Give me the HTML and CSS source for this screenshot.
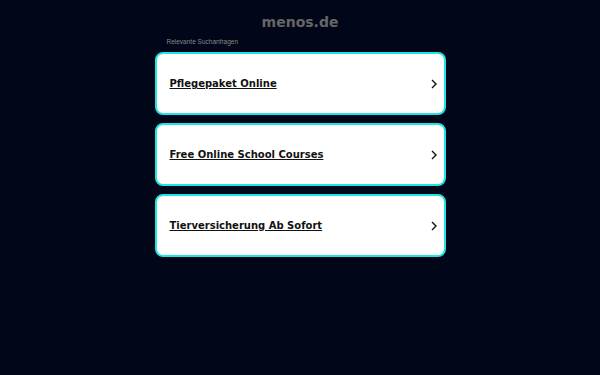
FILE: index.html
```html
<!DOCTYPE html>
<html lang="de">

<head>
  <meta charset="UTF-8">
  <meta name="viewport" content="width=device-width, initial-scale=1.0">
  <title>menos.de</title>
  <link rel="stylesheet" href="styles.css">
</head>

<body>
  <div class="page">
    <h1 class="domain">menos.de</h1>
    <div class="related">
      <p class="related-title">Relevante Suchanfragen</p>
      <ul class="links">
        <li class="link-card">
          <a href="#">Pflegepaket Online</a>
          <svg class="chevron" width="8" height="10" viewBox="0 0 8 10"><polyline points="2,1 6,5 2,9" /></svg>
        </li>
        <li class="link-card">
          <a href="#">Free Online School Courses</a>
          <svg class="chevron" width="8" height="10" viewBox="0 0 8 10"><polyline points="2,1 6,5 2,9" /></svg>
        </li>
        <li class="link-card">
          <a href="#">Tierversicherung Ab Sofort</a>
          <svg class="chevron" width="8" height="10" viewBox="0 0 8 10"><polyline points="2,1 6,5 2,9" /></svg>
        </li>
      </ul>
    </div>
  </div>
</body>

</html>
```

FILE: styles.css
```css
body {
  margin: 0;
  background: #020619;
  font-family: "DejaVu Sans", sans-serif;
}

.page {
  display: flex;
  flex-direction: column;
  align-items: center;
  padding-top: 14px;
}

.domain {
  margin: 0;
  font-size: 14px;
  font-weight: bold;
  color: #666;
  line-height: 17px;
}

.related {
  width: 291px;
  margin-top: 6px;
}

.related-title {
  margin: 0 0 6px 12px;
  font-family: "Liberation Sans", sans-serif;
  font-size: 6.5px;
  color: #888;
  line-height: 9px;
}

.links {
  list-style: none;
  margin: 0;
  padding: 0;
  display: flex;
  flex-direction: column;
  gap: 8px;
}

.link-card {
  height: 63px;
  box-sizing: border-box;
  background: #fff;
  border: 2px solid #22e3e3;
  border-radius: 8px;
  display: flex;
  align-items: center;
  justify-content: space-between;
  padding: 0 6px 0 13px;
}

.link-card a {
  color: #111;
  font-size: 10px;
  font-weight: bold;
  text-decoration: underline;
}

.chevron polyline {
  fill: none;
  stroke: #111;
  stroke-width: 1.4;
}
```
